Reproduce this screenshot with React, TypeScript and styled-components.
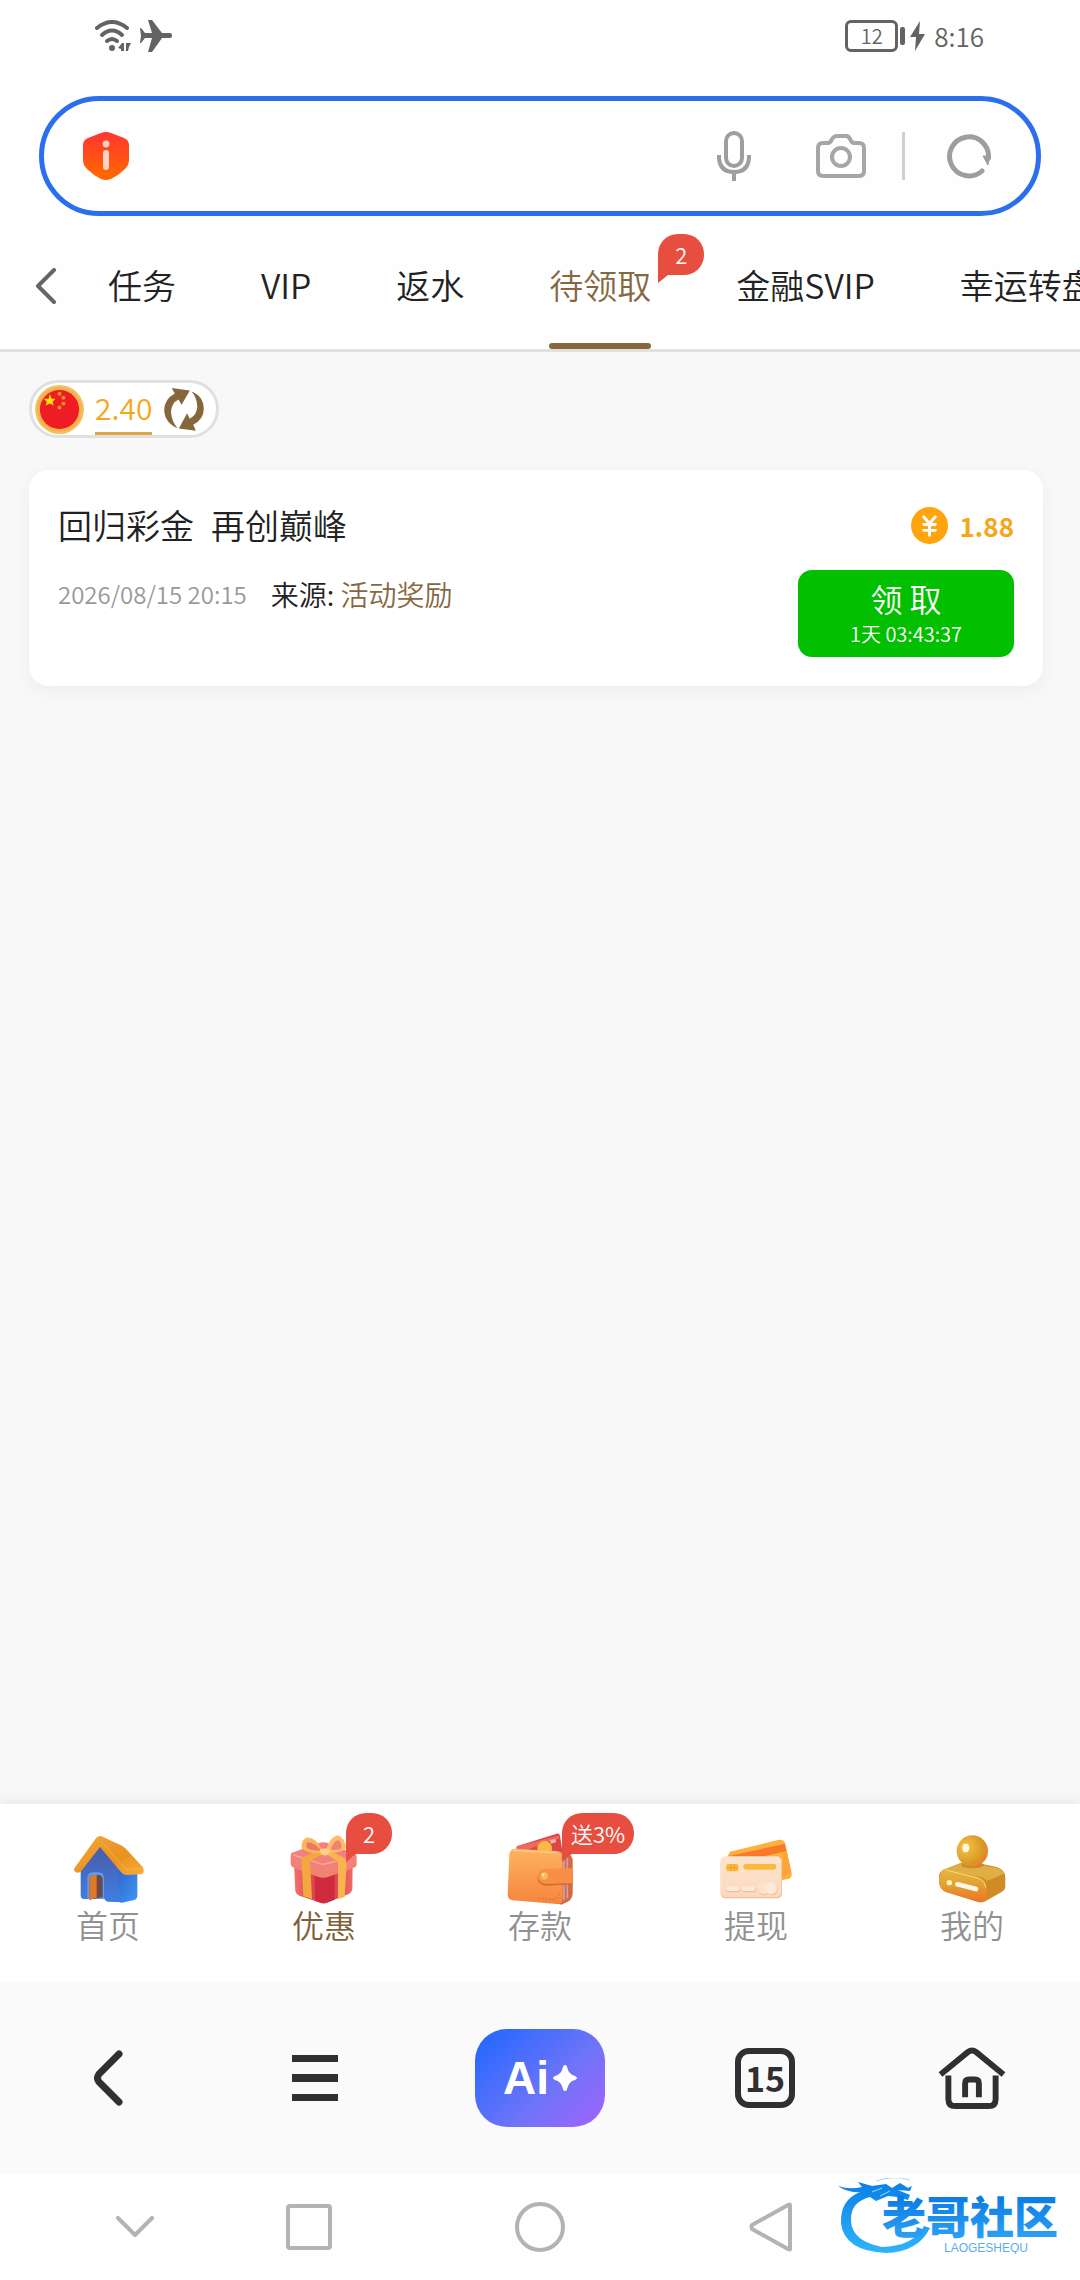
import * as React from "react";
import { FC, ReactNode, useState } from "react";
import styled, { createGlobalStyle } from "styled-components";

type TabItem = {
  label: string;
  badge?: string;
};

type MenuItem = {
  label: string;
  icon: ReactNode;
  badge?: string;
};

const tabs: TabItem[] = [
  { label: "任务" },
  { label: "VIP" },
  { label: "返水" },
  { label: "待领取", badge: "2" },
  { label: "金融SVIP" },
  { label: "幸运转盘" },
];

const HouseIcon: FC = () => (
  <svg width="80" height="72" viewBox="204 130 240 216" aria-hidden="true">
    <defs>
      <linearGradient id="roof" x1="0" y1="0" x2="1" y2="1">
        <stop offset="0" stopColor="#f5a93c" />
        <stop offset="0.6" stopColor="#e8921f" />
        <stop offset="1" stopColor="#f6ac3a" />
      </linearGradient>
      <linearGradient id="wall" x1="0" y1="0" x2="0" y2="1">
        <stop offset="0" stopColor="#4a5aa8" />
        <stop offset="1" stopColor="#3f7fe2" />
      </linearGradient>
      <linearGradient id="side" x1="0" y1="0" x2="1" y2="1">
        <stop offset="0" stopColor="#2f66cc" />
        <stop offset="1" stopColor="#3f97f6" />
      </linearGradient>
    </defs>
    <path d="M242 230 L300 168 L366 244 L366 338 L322 336 Q314 334 312 326 L268 328 L250 328 Q242 326 242 318Z" fill="url(#wall)" />
    <path d="M356 240 L412 250 V318 Q412 328 402 331 L366 339 Q358 339 358 332Z" fill="url(#side)" />
    <path d="M262 328 V266 Q262 248 280 248 H296 Q312 248 312 266 V328Z" fill="#5f9bf0" />
    <path d="M268 330 V270 Q268 256 282 256 H294 Q308 256 308 270 V322Z" fill="#6d4a48" />
    <path d="M268 330 V270 Q268 256 282 256 H290 V324Z" fill="#dc7a2a" />
    <path d="M300 139 Q306 139 314 144 L366 168 Q376 174 384 184 L428 232 Q432 238 431 246 Q429 254 420 254 L380 256 Q370 256 362 246 L300 172 L244 244 Q236 252 228 248 Q220 244 223 236 L288 146 Q294 139 300 139Z" fill="url(#roof)" />
    <path d="M302 154 L372 234 Q378 240 386 239 L428 236" fill="none" stroke="#f9b950" strokeWidth="2" />
  </svg>
);

const GiftIcon: FC = () => (
  <svg width="80" height="72" viewBox="852 130 240 216" aria-hidden="true">
    <defs>
      <linearGradient id="box" x1="0" y1="0" x2="1" y2="0">
        <stop offset="0" stopColor="#f0716b" />
        <stop offset="0.5" stopColor="#d52f43" />
        <stop offset="1" stopColor="#ef6a63" />
      </linearGradient>
      <linearGradient id="lid" x1="0" y1="0" x2="0" y2="1">
        <stop offset="0" stopColor="#f37f86" />
        <stop offset="1" stopColor="#f0836e" />
      </linearGradient>
    </defs>
    <path d="M882 222 L886 304 Q888 314 898 318 L962 339 Q970 342 980 339 L1044 314 Q1056 308 1057 298 L1058 222Z" fill="url(#box)" />
    <path d="M944 260 L946 334 L962 339 Q970 342 980 339 L1004 330 V250Z" fill="#d02a40" />
    <path d="M874 190 L956 160 Q970 156 984 160 L1066 194 Q1070 196 1070 202 V226 Q1068 234 1058 236 L984 262 Q970 266 956 262 L882 234 Q872 230 872 222 V198Z" fill="url(#lid)" />
    <path d="M880 196 L960 222 Q970 225 980 222 L1062 200" fill="none" stroke="#f9aa98" strokeWidth="4" />
    <path d="M904 204 L962 180 L980 188 L930 214 L936 328 L910 320Z" fill="#f3a83e" />
    <path d="M972 188 L988 182 L1034 206 Q1040 214 1040 226 L1034 322 L1014 328 V216Z" fill="#f9b450" />
    <path d="M970 186 Q948 140 918 144 Q900 156 906 176 Q926 196 970 188Z" fill="#fbb659" />
    <path d="M962 182 Q944 158 922 158 Q916 164 922 176 Q940 186 962 182Z" fill="#e87968" />
    <path d="M976 186 Q990 140 1014 137 Q1036 148 1038 172 Q1034 190 976 190Z" fill="#fdbd68" />
    <path d="M992 180 Q1000 154 1016 152 Q1028 162 1024 176 Q1012 184 992 180Z" fill="#ee8271" />
    <path d="M960 180 Q974 172 990 182 L984 196 Q970 200 962 192Z" fill="#ffcf82" />
  </svg>
);

const WalletIcon: FC = () => (
  <svg width="80" height="72" viewBox="300 130 240 216" aria-hidden="true">
    <defs>
      <linearGradient id="leather" x1="0" y1="0" x2="0" y2="1">
        <stop offset="0" stopColor="#fdb361" />
        <stop offset="1" stopColor="#f6853d" />
      </linearGradient>
    </defs>
    <path d="M350 170 L470 132 Q478 130 480 138 L488 190 L350 186Z" fill="#dd4648" />
    <path d="M350 170 L476 138 L478 146 L380 180 L350 182Z" fill="#ee6a5c" />
    <path d="M450 152 l16 -5 l3 10 l-16 5Z" fill="#f8b9a4" />
    <circle cx="434" cy="176" r="22" fill="#f9ba44" />
    <path d="M478 184 L508 196 Q518 200 518 212 V312 Q516 330 500 338 L484 345 L470 340Z" fill="#d46a44" />
    <path d="M492 200 V330 M502 204 V326" stroke="#cfa0a8" strokeWidth="5" />
    <path d="M346 177 L470 184 Q488 186 488 204 V326 Q488 345 470 343 L338 332 Q324 330 323 316 L328 194 Q330 177 346 177Z" fill="url(#leather)" />
    <path d="M342 182 L466 189" stroke="#ffd08f" strokeWidth="4" strokeLinecap="round" />
    <path d="M414 325 L452 329 Q478 330 479 306" fill="none" stroke="#c9602c" strokeWidth="2" strokeDasharray="6 5" />
    <path d="M438 242 L518 240 V284 L440 288 Q412 286 412 264 Q414 242 438 242Z" fill="#d9672e" />
    <path d="M438 237 L518 236 V280 L440 283 Q413 281 413 260 Q414 239 438 237Z" fill="#f98f47" />
    <circle cx="433" cy="259" r="11" fill="#f3bd5a" />
    <circle cx="430" cy="255" r="4" fill="#ffe6a8" />
  </svg>
);

const CardsIcon: FC = () => (
  <svg width="80" height="72" viewBox="108 130 240 216" aria-hidden="true">
    <defs>
      <linearGradient id="front" x1="0" y1="0" x2="0" y2="1">
        <stop offset="0" stopColor="#fde4cc" />
        <stop offset="1" stopColor="#fbd9c0" />
      </linearGradient>
    </defs>
    <path d="M150 186 L294 151 Q312 148 316 162 L335 250 Q337 264 324 268 L290 274 L140 204Z" fill="#fdb13c" />
    <path d="M150 198 L314 163 L319 184 L200 212Z" fill="#f9792a" />
    <path d="M310 188 L320 186 L333 248 L306 262Z" fill="#fba437" />
    <rect x="122" y="202" width="184" height="124" rx="14" fill="#f2bd9b" />
    <rect x="122" y="200" width="182" height="122" rx="14" fill="url(#front)" />
    <rect x="139" y="223" width="36" height="22" rx="5" fill="#fbb93e" />
    <path d="M140 234 H174 M152 224 V244 M163 224 V244" stroke="#e99b2b" strokeWidth="2" />
    <rect x="190" y="223" width="99" height="17" rx="7" fill="#fbb93e" />
    <rect x="139" y="293" width="41" height="15" rx="6" fill="#f0c0a0" />
    <rect x="139" y="290" width="39" height="14" rx="6" fill="#feeadb" />
    <rect x="186" y="293" width="41" height="15" rx="6" fill="#f0c0a0" />
    <rect x="186" y="290" width="39" height="14" rx="6" fill="#feeadb" />
    <circle cx="253" cy="299" r="18" fill="#f0bd98" />
    <circle cx="252" cy="296" r="18" fill="#fde3cc" />
    <circle cx="275" cy="299" r="18" fill="#f0bd98" />
    <circle cx="273" cy="296" r="18" fill="#feeadb" />
  </svg>
);

const UserIcon: FC = () => (
  <svg width="80" height="72" viewBox="756 130 240 216" aria-hidden="true">
    <defs>
      <radialGradient id="head" cx="0.3" cy="0.38" r="0.75">
        <stop offset="0" stopColor="#fff0a8" />
        <stop offset="0.2" stopColor="#ebb83f" />
        <stop offset="0.7" stopColor="#d99a26" />
        <stop offset="1" stopColor="#ee7a2c" />
      </radialGradient>
      <linearGradient id="body" x1="0" y1="0" x2="0" y2="1">
        <stop offset="0" stopColor="#e8b640" />
        <stop offset="0.5" stopColor="#e2a030" />
        <stop offset="1" stopColor="#f2712a" />
      </linearGradient>
    </defs>
    <path d="M790 240 L850 217 Q862 214 874 216 L950 232 Q976 240 976 264 V290 Q976 300 966 306 L916 335 Q906 340 894 337 L800 308 Q778 300 777 276 V258 Q778 246 790 240Z" fill="#cf8b26" />
    <path d="M792 240 L852 218 L950 234 Q968 240 972 252 L920 274 Q910 262 890 260Z" fill="#dfae45" />
    <path d="M800 238 L894 262 Q920 270 920 296 V318 Q918 338 896 336 L802 308 Q778 300 777 274 Q778 236 800 238Z" fill="url(#body)" />
    <path d="M798 241 L892 265 Q915 272 917 294" fill="none" stroke="#f8d97a" strokeWidth="3" />
    <circle cx="808" cy="279" r="8" fill="#fff2cf" />
    <path d="M832 284 L888 298" stroke="#fff8e8" strokeWidth="14" strokeLinecap="round" />
    <ellipse cx="878" cy="226" rx="34" ry="10" fill="#c9882a" />
    <circle cx="877" cy="184" r="47" fill="url(#head)" />
    <ellipse cx="857" cy="175" rx="10" ry="13" fill="#fff8dc" />
  </svg>
);

const menu: MenuItem[] = [
  { label: "首页", icon: <HouseIcon /> },
  { label: "优惠", icon: <GiftIcon />, badge: "2" },
  { label: "存款", icon: <WalletIcon />, badge: "送3%" },
  { label: "提现", icon: <CardsIcon /> },
  { label: "我的", icon: <UserIcon /> },
];

const StatusIcons: FC = () => (
  <svg width="80" height="32" viewBox="0 1 80 32" fill="#636363" aria-hidden="true">
    <g fill="none" stroke="#636363" strokeWidth="4" strokeLinecap="round">
      <path d="M3 9 Q18 -3 33 9" />
      <path d="M8 16 Q18 7 28 16" />
      <path d="M13 22 Q18 18 23 22" />
    </g>
    <circle cx="18" cy="29" r="3" />
    <path d="M30 24 V32 H27 V30 L24 29 L28 24Z M32 24 H37 L35 28 L34 32 H32Z" />
    <path d="M54 1 H58 L68 14 H76 Q78 14 78 17 Q78 19 76 19 H68 L58 33 H54 L58 19 H51 L47 24 H46 L47 17 L46 9 H47 L51 14 H58Z" />
  </svg>
);

const FlagIcon: FC = () => (
  <svg width="49" height="49" viewBox="0 0 50 50" aria-hidden="true">
    <circle cx="25" cy="25" r="25" fill="#f3c263" />
    <circle cx="25" cy="25" r="23" fill="#f5b24e" />
    <circle cx="25" cy="25" r="20" fill="#ee1c25" />
    <path d="M15 9 L17 14 L21 14 L18 17 L19 21 L15 19 L11 21 L12 17 L9 14 L14 14Z" fill="#ffe600" />
    <g fill="#f7902c">
      <circle cx="25" cy="9" r="2" />
      <circle cx="29" cy="13" r="2" />
      <circle cx="29" cy="19" r="2" />
      <circle cx="25" cy="23" r="2" />
    </g>
  </svg>
);

const App: FC = () => {
  const [active, setActive] = useState("待领取");
  const [keyword, setKeyword] = useState("");

  return (
    <Page>
      <GlobalStyle />
      <StatusBar>
        <StatusIcons />
        <StatusRight>
          <Battery>12</Battery>
          <svg width="28" height="32" viewBox="0 1 28 32" fill="#636363" aria-hidden="true">
            <rect x="2" y="8" width="5" height="18" rx="2" />
            <path d="M22 2 L12 18 H18 L17 32 L27 15 H21Z" />
          </svg>
          <Clock>8:16</Clock>
        </StatusRight>
      </StatusBar>

      <SearchBox>
        <svg width="46" height="50" viewBox="0 0 46 50" aria-hidden="true">
          <defs>
            <linearGradient id="shield" x1="0" y1="0" x2="0" y2="1">
              <stop offset="0" stopColor="#ff3530" />
              <stop offset="1" stopColor="#ff6a00" />
            </linearGradient>
          </defs>
          <path
            d="M18 2 Q23 0 28 2 L41 7 Q46 9 46 14 V29 Q46 34 42 38 Q36 44 28 48 Q23 50 18 48 Q10 44 4 38 Q0 34 0 29 V14 Q0 9 5 7Z"
            fill="url(#shield)"
          />
          <circle cx="23" cy="13" r="3.4" fill="#ffd2c2" />
          <path d="M23 22 V36" stroke="#ffd2c2" strokeWidth="6" strokeLinecap="round" />
        </svg>
        <SearchInput
          aria-label="搜索"
          value={keyword}
          onChange={(e) => setKeyword(e.target.value)}
        />
        <SearchTools>
          <IconButton aria-label="语音">
            <svg width="34" height="50" viewBox="0 0 34 50" fill="none" stroke="#9e9e9e" strokeWidth="4">
              <rect x="9" y="2" width="16" height="33" rx="8" />
              <path d="M2 24 V27 Q3 41 17 41 Q31 41 32 27 V24 M17 41 V50" />
            </svg>
          </IconButton>
          <IconButton aria-label="拍照">
            <svg width="50" height="44" viewBox="0 0 50 44" fill="none" stroke="#a6a6a6" strokeWidth="4">
              <path d="M7 9 H11 Q14 9 15 7 L16 5 Q18 2 21 2 H30 Q33 2 34 5 L35 7 Q36 9 39 9 H43 Q48 9 48 14 V37 Q48 42 43 42 H7 Q2 42 2 37 V14 Q2 9 7 9Z" />
              <circle cx="25" cy="23" r="9" />
            </svg>
          </IconButton>
        </SearchTools>
        <Divider />
        <IconButton aria-label="刷新">
          <svg width="46" height="46" viewBox="-1 -1 46 46" fill="none">
            <path
              d="M41.5 24 A19.5 19.5 0 1 0 35 37"
              stroke="#9e9e9e"
              strokeWidth="5"
              strokeLinecap="round"
            />
            <path d="M36 22 L43 22 L41 31Z" fill="#9e9e9e" stroke="#9e9e9e" strokeLinejoin="round" />
          </svg>
        </IconButton>
      </SearchBox>

      <TabBar>
        <BackButton aria-label="返回">
          <svg width="22" height="36" viewBox="0 0 22 36" fill="none" stroke="#666" strokeWidth="4">
            <path d="M19 2 L3 18 L19 34" strokeLinecap="round" strokeLinejoin="round" />
          </svg>
        </BackButton>
        {tabs.map((tab) => (
          <Tab
            key={tab.label}
            $active={tab.label === active}
            onClick={() => setActive(tab.label)}
          >
            {tab.label}
            {tab.badge && <TabBadge>{tab.badge}</TabBadge>}
          </Tab>
        ))}
      </TabBar>

      <Content>
        <Balance>
          <FlagIcon />
          <BalanceLink href="#balance">2.40</BalanceLink>
          <IconButton aria-label="刷新余额">
            <svg width="40" height="43" viewBox="479 84 116 126" fill="#86673b">
              <path d="M501 84 L554 91 L530 133 L521 118 Q500 128 499 155 Q500 180 518 202 Q480 186 479 148 Q480 116 510 100Z" />
              <path d="M572 209 L522 203 L546 158 L554 174 Q575 162 576 138 Q575 112 559 94 Q594 106 595 146 Q594 176 564 192Z" />
            </svg>
          </IconButton>
        </Balance>

        <Card>
          <CardInfo>
            <CardTitle>回归彩金&ensp;再创巅峰</CardTitle>
            <CardMeta>
              <time>2026/08/15 20:15</time>
              <Source>
                来源: <a href="#activity">活动奖励</a>
              </Source>
            </CardMeta>
          </CardInfo>
          <CardSide>
            <Amount>
              <svg width="37" height="37" viewBox="0 0 38 38" fill="none" aria-hidden="true">
                <circle cx="19" cy="19" r="19" fill="#ffa40c" />
                <path
                  d="M13 10 L19 17 L25 10 M13 18 H25 M13 24 H25 M19 17 V29"
                  stroke="#fff"
                  strokeWidth="3"
                  strokeLinecap="round"
                />
              </svg>
              1.88
            </Amount>
            <ClaimButton>
              领 取<small>1天 03:43:37</small>
            </ClaimButton>
          </CardSide>
        </Card>
      </Content>

      <Menu>
        {menu.map((item) => (
          <MenuLink key={item.label} href="#menu" $active={item.label === "优惠"}>
            {item.icon}
            {item.label}
            {item.badge && <MenuBadge>{item.badge}</MenuBadge>}
          </MenuLink>
        ))}
      </Menu>

      <BrowserBar>
        <IconButton aria-label="后退">
          <svg width="30" height="56" viewBox="0 0 30 56" fill="none" stroke="#303030" strokeWidth="7">
            <path d="M26 4 L6 24 Q3 28 6 32 L26 52" strokeLinecap="round" />
          </svg>
        </IconButton>
        <IconButton aria-label="菜单">
          <svg width="46" height="46" viewBox="0 0 46 46" fill="#303030">
            <path d="M0 0 H46 V7 H0Z M0 19 H46 V27 H0Z M0 39 H46 V46 H0Z" />
          </svg>
        </IconButton>
        <AiButton>
          Ai
          <svg width="24" height="26" viewBox="0 0 24 26" fill="#fff" aria-hidden="true">
            <path d="M12 0 Q14 0 14 2 Q16 10 22 11 Q24 12 24 13 Q24 14 22 15 Q16 16 14 24 Q14 26 12 26 Q10 26 10 24 Q8 16 2 15 Q0 14 0 13 Q0 12 2 11 Q8 10 10 2 Q10 0 12 0Z" />
          </svg>
        </AiButton>
        <PagesButton aria-label="15 个标签页">15</PagesButton>
        <IconButton aria-label="主页">
          <svg width="68" height="62" viewBox="0 1 68 63" fill="none" stroke="#303030" strokeWidth="6">
            <path d="M2 29 L30 6 Q34 3 38 6 L66 29" />
            <path d="M10 30 V54 Q10 61 17 61 H51 Q58 61 58 54 V30" />
            <path d="M27 52 V38 Q27 34 31 34 H37 Q41 34 41 38 V52" />
          </svg>
        </IconButton>
      </BrowserBar>

      <SystemBar>
        <IconButton aria-label="收起">
          <svg width="38" height="22" viewBox="0 0 38 22" fill="none" stroke="#b3b3b3" strokeWidth="4">
            <path d="M2 2 L19 19 L36 2" strokeLinecap="round" strokeLinejoin="round" />
          </svg>
        </IconButton>
        <IconButton aria-label="最近任务">
          <svg width="46" height="46" viewBox="0 0 46 46" fill="none" stroke="#b3b3b3" strokeWidth="4">
            <rect x="2" y="2" width="42" height="42" rx="2" />
          </svg>
        </IconButton>
        <IconButton aria-label="桌面">
          <svg width="50" height="50" viewBox="0 0 50 50" fill="none" stroke="#b3b3b3" strokeWidth="4">
            <circle cx="25" cy="25" r="23" />
          </svg>
        </IconButton>
        <IconButton aria-label="上一页">
          <svg width="44" height="50" viewBox="0 1 44 50" fill="none" stroke="#b3b3b3" strokeWidth="4">
            <path d="M41 4 V48 Q41 49 39 48 L3 28 Q2 26 3 24 L39 4 Q41 3 41 4Z" strokeLinejoin="round" />
          </svg>
        </IconButton>
        <Watermark>
          <svg width="226" height="76" viewBox="0 0 226 76" role="img" aria-label="老哥社区">
            <defs>
              <linearGradient id="dragon" x1="0" y1="0" x2="0" y2="1">
                <stop offset="0" stopColor="#0a7fe8" />
                <stop offset="1" stopColor="#2fb4fa" />
              </linearGradient>
              <linearGradient id="brand" x1="0" y1="0" x2="0" y2="1">
                <stop offset="0.2" stopColor="#0a7be4" />
                <stop offset="1" stopColor="#34a8f6" />
              </linearGradient>
            </defs>
            <path
              d="M0 8 Q12 12 24 9 L20 4 L34 8 L48 6 L54 10 L62 5 L70 10 L74 8 L72 13 L60 12 L72 17 L70 22 L60 19 L50 18 L38 23 L32 19 Q12 24 13 43 Q14 63 44 69 Q76 68 86 48 L92 50 Q80 74 48 75 Q6 73 3 45 Q2 22 22 14 Q10 15 0 8Z"
              fill="url(#dragon)"
            />
            <path d="M38 3 Q56 -3 72 2 M34 14 L44 10 M42 18 L52 13" stroke="#a9d4f8" fill="none" />
            <BrandText x="132" y="56">
              老哥社区
            </BrandText>
            <BrandLatin x="148" y="74">
              LAOGESHEQU
            </BrandLatin>
          </svg>
        </Watermark>
      </SystemBar>
    </Page>
  );
};

const GlobalStyle = createGlobalStyle`
  * {
    box-sizing: border-box;
  }
  body {
    margin: 0;
    font-family: "Noto Sans CJK SC", sans-serif;
    font-weight: 350;
    color: #222;
    background: #fff;
  }
  button, input {
    font: inherit;
    color: inherit;
    background: none;
    border: none;
    padding: 0;
  }
  a {
    color: inherit;
    text-decoration: none;
  }
  svg {
    display: block;
    flex: none;
  }
`;

const Page = styled.div`
  display: flex;
  flex-direction: column;
  min-height: 100vh;
  background: #fefefe;
`;

const StatusBar = styled.div`
  display: flex;
  align-items: center;
  justify-content: space-between;
  height: 72px;
  padding: 0 96px 0 94px;
`;

const StatusRight = styled.div`
  display: flex;
  align-items: center;
  color: #636363;
`;

const Battery = styled.div`
  width: 53px;
  height: 32px;
  line-height: 26px;
  border: 3px solid #636363;
  border-radius: 6px;
  font-size: 20px;
  text-align: center;
`;

const Clock = styled.div`
  padding-left: 8px;
  font-size: 26px;
  line-height: 32px;
`;

const SearchBox = styled.div`
  display: flex;
  align-items: center;
  height: 120px;
  margin: 24px 39px 0;
  padding: 0 44px 0 39px;
  border: 5px solid #2b6fee;
  border-radius: 60px;
`;

const SearchInput = styled.input`
  flex: 1;
  min-width: 0;
  height: 80px;
  margin: 0 24px;
  font-size: 34px;
  outline: none;
`;

const SearchTools = styled.div`
  display: flex;
  align-items: center;
  gap: 65px;
`;

const Divider = styled.div`
  width: 3px;
  height: 48px;
  margin: 0 41px 0 36px;
  background: #cfcfcf;
`;

const IconButton = styled.button`
  display: flex;
  align-items: center;
  justify-content: center;
`;

const TabBar = styled.nav`
  display: flex;
  gap: 85px;
  height: 136px;
  border-bottom: 3px solid #e0e0e0;
  overflow: hidden;
`;

const BackButton = styled.button`
  display: flex;
  align-items: center;
  flex: none;
  width: 22px;
  margin: 6px -34px 0 35px;
`;

const Tab = styled.button<{ $active: boolean }>`
  position: relative;
  flex: none;
  padding-top: 10px;
  font-size: 34px;
  white-space: nowrap;
  color: ${(props) => (props.$active ? "#86683f" : "#222")};
  border-bottom: 6px solid transparent;
  &::after {
    content: "";
    position: absolute;
    left: 0;
    right: 0;
    bottom: -6px;
    height: 6px;
    border-radius: 3px;
    background: ${(props) => (props.$active ? "#86683f" : "none")};
  }
`;

const Badge = styled.span`
  position: absolute;
  min-width: 46px;
  height: 41px;
  padding: 0 9px;
  border-radius: 20px 20px 20px 0;
  background: #e84e40;
  color: #fff;
  font-size: 22px;
  line-height: 41px;
  text-align: center;
  white-space: nowrap;
  &::after {
    content: "";
    position: absolute;
    left: 0;
    top: 100%;
    border-top: 8px solid #e84e40;
    border-right: 10px solid transparent;
  }
`;

const TabBadge = styled(Badge)`
  top: 18px;
  left: calc(100% + 7px);
`;

const Content = styled.main`
  flex: 1;
  padding: 28px 37px 0 29px;
  background: #f8f8f8;
`;

const Balance = styled.div`
  display: flex;
  align-items: center;
  width: fit-content;
  height: 58px;
  padding: 0 12px 0 3px;
  border: 3px solid #e0e0e0;
  border-radius: 29px;
  background: #fff;
`;

const BalanceLink = styled.a`
  margin: 0 12px 0 11px;
  border-bottom: 3px solid #dca640;
  color: #f5a71c;
  font-size: 30px;
  line-height: 49px;
`;

const Card = styled.section`
  display: flex;
  justify-content: space-between;
  margin-top: 32px;
  padding: 31px 29px 29px;
  border-radius: 20px;
  background: #fff;
  box-shadow: 0 4px 16px rgba(80, 70, 40, 0.06);
`;

const CardInfo = styled.div`
  display: flex;
  flex-direction: column;
  gap: 21px;
  line-height: 48px;
`;

const CardTitle = styled.h2`
  margin: 0;
  font-size: 34px;
  font-weight: 350;
`;

const CardMeta = styled.div`
  display: flex;
  gap: 24px;
  font-size: 28px;
  color: #999;
  time {
    font-size: 24px;
  }
`;

const Source = styled.span`
  color: #222;
  a {
    color: #86683f;
  }
`;

const CardSide = styled.div`
  display: flex;
  flex-direction: column;
  align-items: flex-end;
  gap: 21px;
`;

const Amount = styled.div`
  display: flex;
  align-items: center;
  gap: 12px;
  height: 48px;
  color: #f5a71c;
  font-size: 26px;
  font-weight: 700;
`;

const ClaimButton = styled.button`
  display: flex;
  flex-direction: column;
  align-items: center;
  width: 216px;
  padding: 7px 0 8px;
  border-radius: 14px;
  background: #02bf00;
  color: #fff;
  font-size: 32px;
  line-height: 42px;
  small {
    font-size: 20px;
    line-height: 30px;
  }
`;

const Menu = styled.nav`
  display: grid;
  grid-template-columns: repeat(5, 1fr);
  height: 178px;
  padding-top: 29px;
  background: #fff;
  box-shadow: 0 -2px 12px rgba(0, 0, 0, 0.08);
`;

const MenuLink = styled.a<{ $active: boolean }>`
  position: relative;
  display: flex;
  flex-direction: column;
  align-items: center;
  font-size: 32px;
  line-height: 38px;
  color: ${(props) => (props.$active ? "#7d6038" : "#919191")};
`;

const MenuBadge = styled(Badge)`
  top: -20px;
  left: calc(50% + 22px);
`;

const BrowserBar = styled.nav`
  position: relative;
  display: grid;
  grid-template-columns: 12fr 11fr 14fr 11fr 12fr;
  align-items: center;
  justify-items: center;
  height: 192px;
  background: #fafafa;
`;

const AiButton = styled.button`
  display: flex;
  align-items: center;
  justify-content: center;
  gap: 4px;
  width: 130px;
  height: 98px;
  border-radius: 32px;
  background: linear-gradient(135deg, #2468ff 5%, #6f74f8 60%, #a262ff);
  color: #fff;
  font-family: "Liberation Sans", sans-serif;
  font-size: 46px;
  font-weight: 700;
`;

const PagesButton = styled.button`
  width: 60px;
  height: 60px;
  border: 6px solid #303030;
  border-radius: 14px;
  color: #303030;
  font-size: 34px;
  font-weight: 700;
  line-height: 46px;
`;

const SystemBar = styled.nav`
  position: relative;
  display: grid;
  grid-template-columns: 29fr 29fr 48fr 29fr 29fr;
  align-items: center;
  justify-items: center;
  height: 106px;
  padding: 0 48px;
`;

const Watermark = styled.div`
  position: absolute;
  top: 4px;
  right: 16px;
`;

const BrandText = styled.text`
  fill: url(#brand);
  font-family: "Noto Sans CJK SC", sans-serif;
  font-size: 44px;
  font-weight: 900;
  text-anchor: middle;
`;

const BrandLatin = styled.text`
  fill: #5aaef0;
  font-family: "Liberation Sans", sans-serif;
  font-size: 12px;
  text-anchor: middle;
`;

export default App;
